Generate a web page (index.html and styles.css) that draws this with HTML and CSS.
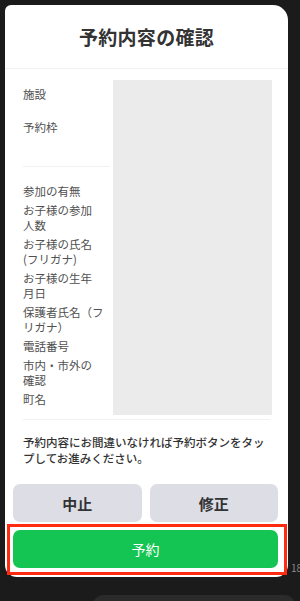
FILE: index.html
```html
<!DOCTYPE html>
<html lang="ja">
<head>
    <meta charset="UTF-8">
    <meta name="viewport" content="width=device-width, initial-scale=1.0">
    <title>予約内容の確認</title>
    <link rel="stylesheet" href="styles.css">
</head>
<body>

<div class="sheet">
    <div class="sheet-header">
        <h1>予約内容の確認</h1>
    </div>

    <div class="detail">
        <div class="labels">
            <div class="label-group first">
                <p class="label">施設</p>
                <p class="label">予約枠</p>
            </div>
            <div class="label-group">
                <p class="label">参加の有無</p>
                <p class="label">お子様の参加<br>人数</p>
                <p class="label">お子様の氏名<br>(フリガナ)</p>
                <p class="label">お子様の生年<br>月日</p>
                <p class="label">保護者氏名（フ<br>リガナ）</p>
                <p class="label">電話番号</p>
                <p class="label">市内・市外の<br>確認</p>
                <p class="label">町名</p>
            </div>
        </div>
        <div class="values"></div>
    </div>

    <div class="divider"></div>

    <p class="notice">予約内容にお間違いなければ予約ボタンをタップしてお進みください。</p>

    <div class="actions">
        <button class="btn btn-sub">中止</button>
        <button class="btn btn-sub">修正</button>
    </div>

    <!-- highlighted primary action -->
    <div class="highlight">
        <button class="btn btn-reserve">予約</button>
    </div>
</div>

<span class="edge-text">18</span>
<div class="bottom-bar"></div>

</body>
</html>
```

FILE: styles.css
```css
body {
    font-family: "Noto Sans CJK JP", "Noto Sans", sans-serif;
    background-color: #1b1b1b;
    margin: 0;
    padding: 5px 0 0 0;
    width: 300px;
    height: 596px;
    overflow: hidden;
    position: relative;
}

.sheet {
    background-color: #fff;
    width: 283px;
    margin-left: 5px;
    border-radius: 6px 15px 12px 12px;
    padding-bottom: 2px;
}

.sheet-header {
    height: 63px;
    border-bottom: 1px solid #f1f1f1;
    display: flex;
    justify-content: center;
    align-items: center;
}

h1 {
    margin: 0;
    font-size: 19px;
    font-weight: 700;
    color: #333;
    letter-spacing: 0.3px;
}

.detail {
    display: flex;
    padding: 11px 16px 0 18px;
}

.labels {
    width: 90px;
    padding-top: 7px;
}

.label-group {
    display: flex;
    flex-direction: column;
    gap: 4px;
    width: 87px;
    padding-top: 17px;
}

.label-group.first {
    gap: 18px;
    padding-top: 0;
    padding-bottom: 31px;
    border-bottom: 1px solid #f1f1f1;
}

.label {
    margin: 0;
    font-size: 11.5px;
    line-height: 15px;
    color: #505050;
    white-space: nowrap;
}

.values {
    flex: 1;
    height: 335px;
    background-color: #ebebeb;
}

.divider {
    height: 1px;
    background-color: #f1f1f1;
    margin: 4px 18px 0 18px;
}

.notice {
    margin: 14px 18px 0 18px;
    font-size: 11.5px;
    line-height: 16px;
    font-weight: 500;
    color: #333;
}

.actions {
    display: flex;
    gap: 8px;
    padding: 0 10px 0 8px;
    margin-top: 18px;
}

.btn {
    border: none;
    cursor: pointer;
    font-family: inherit;
    border-radius: 7px;
    height: 38px;
}

.btn-sub {
    flex: 1;
    background-color: #dddde5;
    color: #333;
    font-size: 15px;
    font-weight: 700;
}

.highlight {
    margin: 2px 1px 0 2px;
    border: 3px solid #ff2a10;
    padding: 3px 6px 4px 3px;
}

.btn-reserve {
    display: block;
    width: 100%;
    background-color: #14c553;
    color: #fff;
    font-size: 14px;
}

.edge-text {
    position: absolute;
    left: 291px;
    top: 560px;
    font-size: 10px;
    color: #8a8a8a;
}

.bottom-bar {
    margin: 18px 5px 0 93px;
    height: 20px;
    border-radius: 10px;
    background-color: #2b2b2b;
}
```
